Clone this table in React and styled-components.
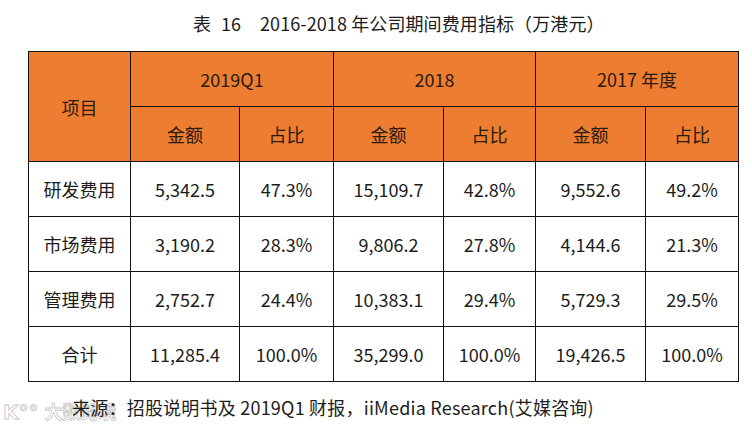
import React from "react"
import styled, { createGlobalStyle } from "styled-components"

const GlobalStyle = createGlobalStyle`
  html, body {
    margin: 0;
    padding: 0;
    background: #ffffff;
  }
  body {
    font-family: "Noto Sans CJK SC", "Noto Sans", sans-serif;
    color: #1c1c1c;
  }
`

const Page = styled.div`
  position: relative;
  width: 752px;
  height: 434px;
  overflow: hidden;
  background: #fff;
`

const Title = styled.div`
  height: 51px;
  padding: 11px 0 0 193px;
  box-sizing: border-box;
  font-size: 18px;
  line-height: 24px;
  white-space: nowrap;
  span {
    display: inline-block;
  }
  .label {
    margin-right: 10px;
  }
  .num {
    margin-right: 19px;
  }
  .rest {
    letter-spacing: 0.1px;
  }
`

const TableWrap = styled.div`
  padding-left: 28px;
`

const Table = styled.table`
  border-collapse: collapse;
  table-layout: fixed;
  width: 711px;
  font-size: 18px;
  td,
  th {
    border: 1px solid #111;
    height: 54px;
    padding: 0;
    text-align: center;
    vertical-align: middle;
    font-weight: 400;
    line-height: 24px;
    white-space: nowrap;
  }
`

const HeadCell = styled.th`
  background: #ed7d31;
  color: #2a1a10;
`

/* footer text sits above the faint watermark */
const Footer = styled.div`
  position: relative;
  z-index: 1;
  padding: 12px 0 0 72px;
  font-size: 18px;
  line-height: 26px;
  letter-spacing: 0.22px;
  white-space: nowrap;
`

const Watermark = styled.div`
  position: absolute;
  z-index: 0;
  left: 3px;
  top: 398px;
  font-size: 18px;
  font-weight: 700;
  color: #fff;
  -webkit-text-stroke: 0.8px #bdbdbd;
  opacity: 0.85;
  white-space: nowrap;
  .logo {
    font-family: "DejaVu Sans", sans-serif;
    font-size: 20px;
    margin-right: 6px;
  }
`

const widths = [102, 109, 94, 110, 92, 110, 93]

const rows = [
  ["研发费用", "5,342.5", "47.3%", "15,109.7", "42.8%", "9,552.6", "49.2%"],
  ["市场费用", "3,190.2", "28.3%", "9,806.2", "27.8%", "4,144.6", "21.3%"],
  ["管理费用", "2,752.7", "24.4%", "10,383.1", "29.4%", "5,729.3", "29.5%"],
  ["合计", "11,285.4", "100.0%", "35,299.0", "100.0%", "19,426.5", "100.0%"],
]

const periods = ["2019Q1", "2018", "2017 年度"]

export default function App() {
  return (
    <Page>
      <GlobalStyle />
      <Title>
        <span className="label">表</span>
        <span className="num">16</span>
        <span className="rest">2016-2018 年公司期间费用指标（万港元）</span>
      </Title>
      <TableWrap>
        <Table>
          <colgroup>
            {widths.map((w, i) => (
              <col key={i} style={{ width: w }} />
            ))}
          </colgroup>
          <thead>
            <tr>
              <HeadCell rowSpan={2}>项目</HeadCell>
              {periods.map((p) => (
                <HeadCell key={p} colSpan={2}>
                  {p}
                </HeadCell>
              ))}
            </tr>
            <tr>
              {periods.map((p) => (
                <React.Fragment key={p}>
                  <HeadCell>金额</HeadCell>
                  <HeadCell>占比</HeadCell>
                </React.Fragment>
              ))}
            </tr>
          </thead>
          <tbody>
            {rows.map((r) => (
              <tr key={r[0]}>
                {r.map((c, i) => (
                  <td key={i}>{c}</td>
                ))}
              </tr>
            ))}
          </tbody>
        </Table>
      </TableWrap>
      <Watermark>
        <span className="logo">K°°</span>大数跨境
      </Watermark>
      <Footer>来源：招股说明书及 2019Q1 财报，iiMedia Research(艾媒咨询)</Footer>
    </Page>
  )
}
